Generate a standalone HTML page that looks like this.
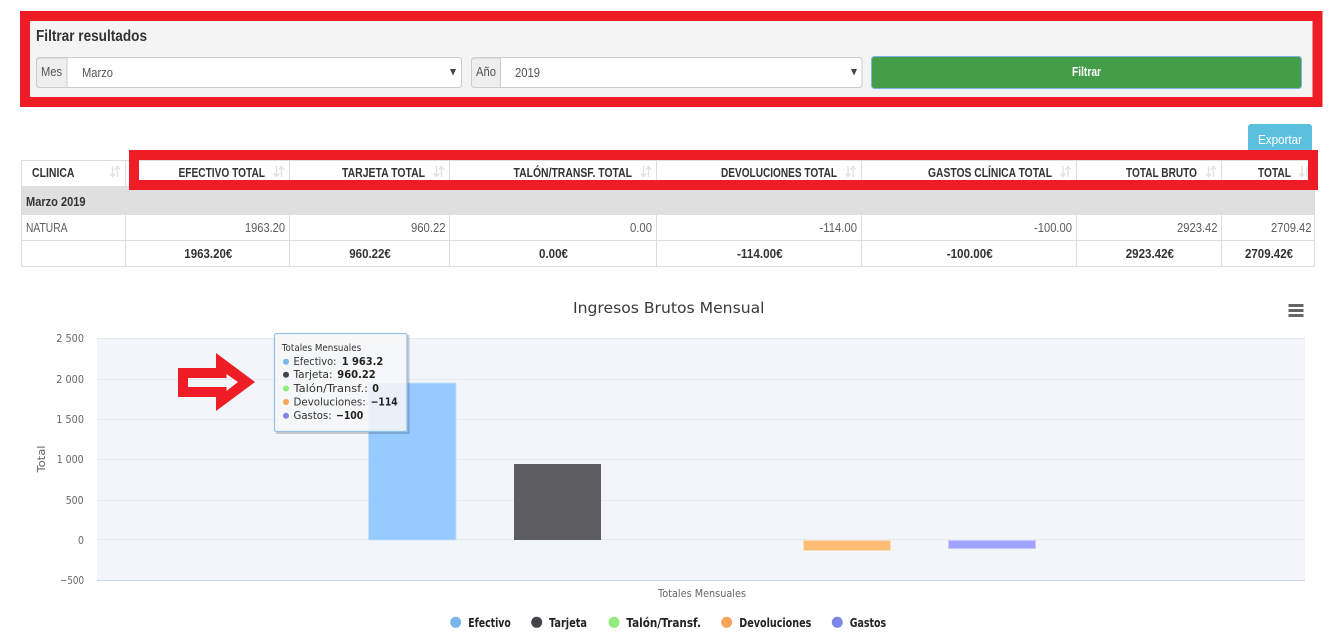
<!DOCTYPE html>
<html lang="es"><head><meta charset="utf-8"><title>Ingresos Brutos Mensual</title>
<style>
html,body{margin:0;padding:0;background:#fff;width:1333px;height:640px;overflow:hidden}
svg{display:block}
.s{font-family:"Liberation Sans",sans-serif;font-size:13px;fill:#333}
.d{fill:#5c5c5c}
.b{font-weight:700}
.c{font-family:"DejaVu Sans",sans-serif;font-size:10.500px;fill:#666}
.t{font-family:"DejaVu Sans",sans-serif;font-size:10.500px;fill:#333}
.tb{font-family:"DejaVu Sans",sans-serif;font-size:11px;fill:#222;font-weight:700}
.l{font-family:"DejaVu Sans",sans-serif;font-size:12px;fill:#222;font-weight:700}
.sort{stroke:#e2e2e2;stroke-width:1.400;fill:none}
</style></head><body>
<svg xmlns="http://www.w3.org/2000/svg" width="1333" height="640" viewBox="0 0 1333 640">
<defs>
<g id="so"><path class="sort" d="M3 0V10M0.500 7.500L3 10.500L5.500 7.500M8 11V1M5.500 3.500L8 0.500L10.500 3.500"/></g>
</defs>

<!-- Filter panel -->
<rect x="20" y="11" width="1302.500" height="96" fill="#ee1c25"/>
<rect x="30" y="21" width="1282.500" height="76" fill="#f4f4f4"/>
<text class="s b" x="36" y="41" style="font-size:15.500px" textLength="111" lengthAdjust="spacingAndGlyphs">Filtrar resultados</text>

<rect x="36.500" y="57.500" width="425" height="30" rx="3" fill="#fff" stroke="#ccc"/>
<path d="M67 58H39.500a3 3 0 0 0-3 3V84.500a3 3 0 0 0 3 3H67Z" fill="#eee" stroke="#ccc"/>
<text class="s" style="fill:#555" x="41" y="76" textLength="21" lengthAdjust="spacingAndGlyphs">Mes</text>
<text class="s" style="fill:#555" x="82" y="77" textLength="31" lengthAdjust="spacingAndGlyphs">Marzo</text>
<path d="M450 69H456L453 75.500Z" fill="#444"/>

<rect x="471.500" y="57.500" width="390.500" height="30" rx="3" fill="#fff" stroke="#ccc"/>
<path d="M500.500 58H474.500a3 3 0 0 0-3 3V84.500a3 3 0 0 0 3 3H500.500Z" fill="#eee" stroke="#ccc"/>
<text class="s" style="fill:#555" x="476" y="76" textLength="20" lengthAdjust="spacingAndGlyphs">Año</text>
<text class="s" style="fill:#555" x="515" y="77" textLength="25" lengthAdjust="spacingAndGlyphs">2019</text>
<path d="M851 69H857L854 75.500Z" fill="#444"/>

<rect x="871.500" y="56.500" width="430" height="32" rx="3" fill="#449d48" stroke="#7fb2e6"/>
<text class="s b" style="fill:#fff" x="1072" y="76" textLength="29" lengthAdjust="spacingAndGlyphs">Filtrar</text>

<!-- Export -->
<path d="M1248 150V127a3 3 0 0 1 3-3H1309a3 3 0 0 1 3 3V150Z" fill="#5bc0de"/>
<text class="s" style="fill:#fff" x="1258" y="144" textLength="44" lengthAdjust="spacingAndGlyphs">Exportar</text>

<!-- Table -->
<rect x="21.500" y="160.500" width="1293" height="106" fill="#fff" stroke="#ddd"/>
<rect x="22" y="186" width="1292" height="29" fill="#dfdfdf"/>
<path d="M22 240.500H1314" stroke="#ddd"/>
<path d="M125.500 161V186M125.500 215V266M289.500 161V186M289.500 215V266M449.500 161V186M449.500 215V266M656.500 161V186M656.500 215V266M861.500 161V186M861.500 215V266M1076.500 161V186M1076.500 215V266M1221.500 161V186M1221.500 215V266" stroke="#ddd"/>

<!-- Highlight frame around header cells -->
<path fill-rule="evenodd" d="M129 150H1318V190H129ZM139 160V180H1308V160Z" fill="#ee1c25"/>

<g class="hd">
<text class="s b" x="32" y="177" textLength="42.500" lengthAdjust="spacingAndGlyphs">CLINICA</text>
<text class="s b" x="178.500" y="177" textLength="86.500" lengthAdjust="spacingAndGlyphs">EFECTIVO TOTAL</text>
<text class="s b" x="342" y="177" textLength="83" lengthAdjust="spacingAndGlyphs">TARJETA TOTAL</text>
<text class="s b" x="513.500" y="177" textLength="118.500" lengthAdjust="spacingAndGlyphs">TALÓN/TRANSF. TOTAL</text>
<text class="s b" x="721" y="177" textLength="116" lengthAdjust="spacingAndGlyphs">DEVOLUCIONES TOTAL</text>
<text class="s b" x="928" y="177" textLength="124" lengthAdjust="spacingAndGlyphs">GASTOS CLÍNICA TOTAL</text>
<text class="s b" x="1126" y="177" textLength="71" lengthAdjust="spacingAndGlyphs">TOTAL BRUTO</text>
<text class="s b" x="1258" y="177" textLength="33" lengthAdjust="spacingAndGlyphs">TOTAL</text>
<use href="#so" x="109.500" y="166"/>
<use href="#so" x="273.500" y="166"/>
<use href="#so" x="433.500" y="166"/>
<use href="#so" x="640.500" y="166"/>
<use href="#so" x="845" y="166"/>
<use href="#so" x="1060" y="166"/>
<use href="#so" x="1205.500" y="166"/>
<path class="sort" d="M1302 166V176M1299.500 173.500L1302 176.500L1304.500 173.500M1307 177V167" />
</g>

<text class="s b" x="26" y="206" textLength="59.500" lengthAdjust="spacingAndGlyphs">Marzo 2019</text>

<text class="s d" x="26" y="232" textLength="41.500" lengthAdjust="spacingAndGlyphs">NATURA</text>
<text class="s d" x="245" y="232" textLength="40" lengthAdjust="spacingAndGlyphs">1963.20</text>
<text class="s d" x="411" y="232" textLength="34.500" lengthAdjust="spacingAndGlyphs">960.22</text>
<text class="s d" x="630" y="232" textLength="22" lengthAdjust="spacingAndGlyphs">0.00</text>
<text class="s d" x="819.500" y="232" textLength="37.500" lengthAdjust="spacingAndGlyphs">-114.00</text>
<text class="s d" x="1034" y="232" textLength="38" lengthAdjust="spacingAndGlyphs">-100.00</text>
<text class="s d" x="1177" y="232" textLength="40.500" lengthAdjust="spacingAndGlyphs">2923.42</text>
<text class="s d" x="1271" y="232" textLength="40.500" lengthAdjust="spacingAndGlyphs">2709.42</text>

<text class="s b" x="184.300" y="258" textLength="48" lengthAdjust="spacingAndGlyphs">1963.20€</text>
<text class="s b" x="349.300" y="258" textLength="41.500" lengthAdjust="spacingAndGlyphs">960.22€</text>
<text class="s b" x="539" y="258" textLength="29" lengthAdjust="spacingAndGlyphs">0.00€</text>
<text class="s b" x="737" y="258" textLength="45.700" lengthAdjust="spacingAndGlyphs">-114.00€</text>
<text class="s b" x="946.700" y="258" textLength="46" lengthAdjust="spacingAndGlyphs">-100.00€</text>
<text class="s b" x="1125.700" y="258" textLength="48.300" lengthAdjust="spacingAndGlyphs">2923.42€</text>
<text class="s b" x="1245" y="258" textLength="48" lengthAdjust="spacingAndGlyphs">2709.42€</text>

<!-- Chart -->
<text x="573" y="313" style="font-family:'DejaVu Sans',sans-serif;font-size:15px;fill:#3a3a3a" textLength="191.500" lengthAdjust="spacingAndGlyphs">Ingresos Brutos Mensual</text>
<path d="M1288.500 305.500H1303.500M1288.500 310.500H1303.500M1288.500 315.500H1303.500" stroke="#666" stroke-width="3"/>

<rect x="97" y="338" width="1208" height="242" fill="#f2f5fa"/>
<path d="M97 338.500H1305M97 379.500H1305M97 419.500H1305M97 459.500H1305M97 500.500H1305M97 539.500H1305" stroke="#e6e9ef"/>
<path d="M97 580.500H1305" stroke="#ccd6eb"/>

<g class="ax">
<text class="c" x="56.300" y="342" textLength="27.700" lengthAdjust="spacingAndGlyphs">2 500</text>
<text class="c" x="56.300" y="383" textLength="27.700" lengthAdjust="spacingAndGlyphs">2 000</text>
<text class="c" x="56.300" y="423" textLength="27.700" lengthAdjust="spacingAndGlyphs">1 500</text>
<text class="c" x="56.700" y="463" textLength="27" lengthAdjust="spacingAndGlyphs">1 000</text>
<text class="c" x="65.700" y="504" textLength="18" lengthAdjust="spacingAndGlyphs">500</text>
<text class="c" x="78" y="544" textLength="6" lengthAdjust="spacingAndGlyphs">0</text>
<text class="c" x="60" y="584" textLength="24" lengthAdjust="spacingAndGlyphs">−500</text>
<text class="c" transform="translate(45,472.500) rotate(-90)" textLength="27" lengthAdjust="spacingAndGlyphs">Total</text>
<text class="c" x="658" y="597" textLength="88" lengthAdjust="spacingAndGlyphs">Totales Mensuales</text>
</g>

<rect x="368.500" y="383" width="87.500" height="157" fill="#97cbff" stroke="#c3e0fb" stroke-width=".8"/>
<rect x="514" y="464" width="87" height="76" fill="#5c5c61"/>
<rect x="803.500" y="540.500" width="87" height="10" fill="#ffbc75" stroke="#fde0c0" stroke-width=".8"/>
<rect x="948.500" y="540.500" width="87" height="8" fill="#a0a3ff" stroke="#c7c9f8" stroke-width=".8"/>

<!-- Tooltip -->
<path d="M408.500 335V433H276" fill="none" stroke="#000" stroke-opacity=".18" stroke-width="2"/>
<rect x="274.500" y="333.500" width="132.500" height="98" rx="2" fill="#f7f7f7" fill-opacity=".85" stroke="#93bfe9" stroke-width="1.200"/>
<text class="t" x="281.700" y="351" style="font-size:9.500px" textLength="79.500" lengthAdjust="spacingAndGlyphs">Totales Mensuales</text>
<circle cx="286" cy="361.700" r="3" fill="#7cb5ec"/>
<text class="t" x="293.500" y="365" textLength="43" lengthAdjust="spacingAndGlyphs">Efectivo:</text>
<text class="tb" x="341.700" y="365" textLength="41.600" lengthAdjust="spacingAndGlyphs">1 963.2</text>
<circle cx="286" cy="374.700" r="3" fill="#434348"/>
<text class="t" x="293.500" y="378" textLength="39" lengthAdjust="spacingAndGlyphs">Tarjeta:</text>
<text class="tb" x="337.300" y="378" textLength="38.400" lengthAdjust="spacingAndGlyphs">960.22</text>
<circle cx="286" cy="388.500" r="3" fill="#90ed7d"/>
<text class="t" x="293.500" y="392" textLength="74.500" lengthAdjust="spacingAndGlyphs">Talón/Transf.:</text>
<text class="tb" x="372.300" y="392" textLength="6.700" lengthAdjust="spacingAndGlyphs">0</text>
<circle cx="286" cy="402" r="3" fill="#f7a35c"/>
<text class="t" x="293.500" y="405.500" textLength="72.200" lengthAdjust="spacingAndGlyphs">Devoluciones:</text>
<text class="tb" x="370.700" y="405.500" textLength="27" lengthAdjust="spacingAndGlyphs">−114</text>
<circle cx="286" cy="415.700" r="3" fill="#8085e9"/>
<text class="t" x="293.500" y="419" textLength="38.200" lengthAdjust="spacingAndGlyphs">Gastos:</text>
<text class="tb" x="336" y="419" textLength="27.300" lengthAdjust="spacingAndGlyphs">−100</text>

<!-- Annotation arrow -->
<path fill-rule="evenodd" d="M178 368H216V353L255 382L216 411V397H178ZM188 378V387H226.500V391L238 382L226.500 374V378Z" fill="#ee1c25"/>

<!-- Legend -->
<circle cx="455.700" cy="622.300" r="5.500" fill="#7cb5ec"/>
<text class="l" x="468.300" y="627" textLength="42.500" lengthAdjust="spacingAndGlyphs">Efectivo</text>
<circle cx="536.700" cy="622.300" r="5.500" fill="#434348"/>
<text class="l" x="549" y="627" textLength="38" lengthAdjust="spacingAndGlyphs">Tarjeta</text>
<circle cx="614" cy="622.300" r="5.500" fill="#90ed7d"/>
<text class="l" x="626.300" y="627" textLength="74.700" lengthAdjust="spacingAndGlyphs">Talón/Transf.</text>
<circle cx="726.700" cy="622.300" r="5.500" fill="#f7a35c"/>
<text class="l" x="739.300" y="627" textLength="72" lengthAdjust="spacingAndGlyphs">Devoluciones</text>
<circle cx="837.300" cy="622.300" r="5.500" fill="#8085e9"/>
<text class="l" x="849.700" y="627" textLength="36.500" lengthAdjust="spacingAndGlyphs">Gastos</text>
</svg>
</body></html>
